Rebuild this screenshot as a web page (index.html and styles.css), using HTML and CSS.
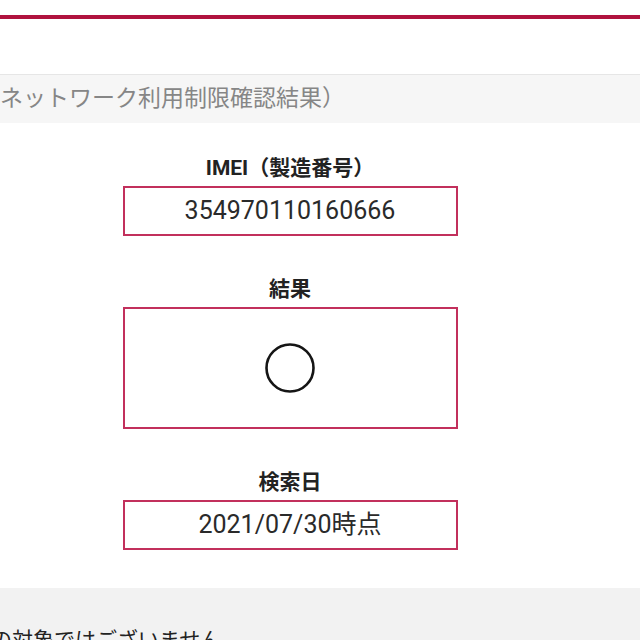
FILE: index.html
```html
<!DOCTYPE html>
<html lang="ja">
<head>
  <meta charset="UTF-8" />
  <meta name="viewport" content="width=device-width, initial-scale=1.0" />
  <title>ネットワーク利用制限確認結果</title>
  <link rel="stylesheet" href="styles.css">
</head>
<body>

  <div class="topbar"></div>

  <div class="section-title">ネットワーク利用制限確認結果）</div>

  <div class="result">
    <div class="field">
      <div class="label">IMEI（製造番号）</div>
      <div class="box">354970110160666</div>
    </div>

    <div class="field">
      <div class="label">結果</div>
      <div class="box box-large">
        <svg class="mark" width="52" height="52" viewBox="0 0 52 52">
          <circle cx="26" cy="26" r="23.5" fill="none" stroke="#151515" stroke-width="2.6" />
        </svg>
      </div>
    </div>

    <div class="field">
      <div class="label">検索日</div>
      <div class="box">2021/07/30時点</div>
    </div>
  </div>

  <div class="note">
    <p>の対象ではございません</p>
  </div>

</body>
</html>
```

FILE: styles.css
```css
body {
  margin: 0;
  font-family: Roboto, "Noto Sans CJK JP", sans-serif;
  background: #fff;
  color: #222;
  overflow: hidden;
}

.topbar {
  margin-top: 15px;
  height: 4px;
  background: #b0123e;
  margin-bottom: 55px;
}

.section-title {
  border-top: 1px solid #e6e6e6;
  background: #f6f6f6;
  color: #868686;
  font-size: 23px;
  line-height: 48px;
  height: 48px;
  white-space: nowrap;
}

.result {
  width: 580px;
  padding: 30px 0 38px;
  text-align: center;
}

.field + .field {
  margin-top: 38px;
}

.label {
  font-size: 21px;
  font-weight: bold;
  line-height: 30px;
  margin-bottom: 3px;
}

.box {
  box-sizing: border-box;
  width: 335px;
  height: 50px;
  margin: 0 auto;
  border: 2px solid #c2305c;
  color: #2a2a2a;
  font-size: 25px;
  line-height: 46px;
}

.box-large {
  height: 122px;
  display: flex;
  align-items: center;
  justify-content: center;
}

.mark {
  display: block;
}

.note {
  background: #f2f2f2;
  padding-top: 37px;
  height: 60px;
}

.note p {
  margin: 0;
  font-size: 21px;
  line-height: 30px;
  text-indent: -9px;
  white-space: nowrap;
}
```
